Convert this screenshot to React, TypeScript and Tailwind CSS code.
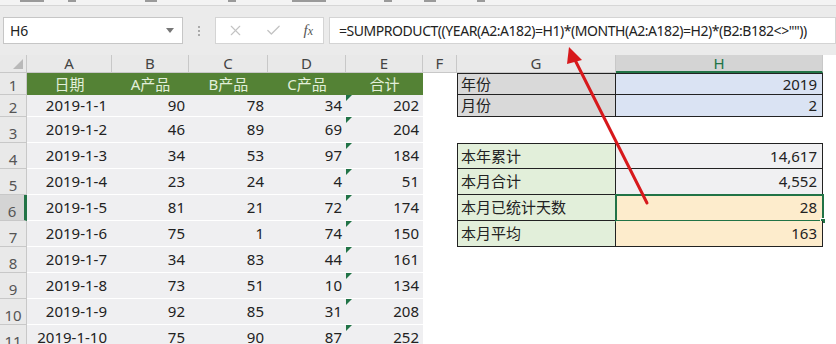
import { X, Check } from "lucide-react";

const font = { fontFamily: '"Noto Sans", "Noto Sans CJK SC", sans-serif' };

const rows: [string, number, number, number, number][] = [
  ["2019-1-1", 90, 78, 34, 202],
  ["2019-1-2", 46, 89, 69, 204],
  ["2019-1-3", 34, 53, 97, 184],
  ["2019-1-4", 23, 24, 4, 51],
  ["2019-1-5", 81, 21, 72, 174],
  ["2019-1-6", 75, 1, 74, 150],
  ["2019-1-7", 34, 83, 44, 161],
  ["2019-1-8", 73, 51, 10, 134],
  ["2019-1-9", 92, 85, 31, 208],
  ["2019-1-10", 75, 90, 87, 252],
];

// right-hand summary block, indexed by sheet row (1-based)
const side: Record<number, { label: string; value: string; g: string; h: string; top?: boolean }> = {
  1: { label: "年份", value: "2019", g: "bg-[#d9d9d9]", h: "bg-[#dae3f3]", top: true },
  2: { label: "月份", value: "2", g: "bg-[#d9d9d9]", h: "bg-[#dae3f3]" },
  4: { label: "本年累计", value: "14,617", g: "bg-[#e2efda]", h: "bg-[#f0f0f2]", top: true },
  5: { label: "本月合计", value: "4,552", g: "bg-[#e2efda]", h: "bg-[#f0f0f2]" },
  6: { label: "本月已统计天数", value: "28", g: "bg-[#e2efda]", h: "bg-[#fdeccc]" },
  7: { label: "本月平均", value: "163", g: "bg-[#e2efda]", h: "bg-[#fdeccc]" },
};

const cols = ["A", "B", "C", "D", "E", "F", "G", "H"];

// x, width of the unreadable ribbon label stubs peeking in at the top
const ribbonStubs = [
  [20, 24], [68, 8], [145, 12], [228, 8], [292, 34], [384, 8], [424, 12], [477, 8],
];

function RowHead({ n }: { n: number }) {
  const sel = n === 6;
  return (
    <div
      className={
        "flex items-end justify-center pb-[1px] border-b border-[#c8c8c8] text-[15px] leading-none " +
        (sel ? "bg-[#d4d4d4] text-[#555] border-r-[3px] border-r-[#217346]" : "bg-[#e9e9e9] text-[#555] border-r border-r-[#c8c8c8]")
      }
    >
      {n}
    </div>
  );
}

function SideCells({ n }: { n: number }) {
  const s = side[n];
  if (!s) {
    return (
      <>
        <div className="bg-white" />
        <div className="bg-white" />
      </>
    );
  }
  const t = s.top ? " border-t" : "";
  const sel = n === 6;
  return (
    <>
      <div className={`${s.g} border-l border-b border-r border-black${t} flex items-center pl-[3px] text-[15px] text-[#222]`}>
        {s.label}
      </div>
      <div className={`${s.h} relative border-b border-r border-black${t} flex items-center justify-end pr-[5px] text-[15px] text-[#222]`}>
        {sel && (
          <div className="absolute -left-[1px] -top-[1px] -right-[2px] -bottom-[2px] border-2 border-[#217346]">
            <div className="absolute -right-[4px] -bottom-[4px] w-[6px] h-[6px] bg-[#217346] border border-white" />
          </div>
        )}
        <span className="relative">{s.value}</span>
      </div>
    </>
  );
}

export default function App() {
  return (
    <div className="relative w-[836px] h-[344px] overflow-hidden bg-[#ebebeb]" style={font}>
      {/* ribbon remnant */}
      <div className="h-[6px] bg-[#f3f3f3] border-b border-[#d6d6d6] relative">
        {ribbonStubs.map(([x, w]) => (
          <span key={x} className="absolute top-0 h-[2px] bg-[#9a9a9a]" style={{ left: x, width: w }} />
        ))}
      </div>

      {/* formula bar */}
      <div className="flex items-center h-[49px] pl-[3px]">
        <div className="w-[180px] h-[27px] bg-white border border-[#c6c6c6] flex items-center justify-between pl-[6px] pr-[8px]">
          <span className="text-[14px] text-[#222]">H6</span>
          <svg width="8" height="5" viewBox="0 0 8 5">
            <path d="M0 0h8L4 5z" fill="#777" />
          </svg>
        </div>
        <div className="w-[32px] flex flex-col items-center gap-[2px]">
          <span className="w-[2px] h-[2px] bg-[#aaa]" />
          <span className="w-[2px] h-[2px] bg-[#aaa]" />
          <span className="w-[2px] h-[2px] bg-[#aaa]" />
        </div>
        <div className="w-[109px] h-[27px] bg-white border border-[#d4d4d4] flex items-center justify-between pl-[11px] pr-[10px]">
          <X size={17} strokeWidth={1.6} color="#c3c3c3" />
          <Check size={17} strokeWidth={1.8} color="#c3c3c3" />
          <span className="text-[15px] italic text-[#555]" style={{ fontFamily: '"Liberation Serif", serif' }}>
            f<span className="text-[12px]">x</span>
          </span>
        </div>
        <div className="ml-[5px] flex-1 h-[27px] bg-white border border-[#d4d4d4] flex items-center pl-[9px] text-[14px] text-[#222] tracking-[-0.45px]">
          =SUMPRODUCT((YEAR(A2:A182)=H1)*(MONTH(A2:A182)=H2)*(B2:B182&lt;&gt;""))
        </div>
      </div>

      {/* sheet grid */}
      <div className="grid grid-cols-[27px_85px_77px_79px_78px_77px_34px_159px_207px_13px] grid-rows-[18px_22px_22px_26px_26px_26px_26px_26px_26px_26px_26px_26px] bg-white">
        {/* column header row */}
        <div className="bg-[#e9e9e9] border-r border-b border-[#c8c8c8] relative">
          <svg className="absolute right-[3px] bottom-[3px]" width="10" height="10" viewBox="0 0 10 10">
            <path d="M10 0V10H0z" fill="#b9b9b9" />
          </svg>
        </div>
        {cols.map((c) => (
          <div
            key={c}
            className={
              "flex items-center justify-center text-[15px] leading-none border-r border-[#c8c8c8] " +
              (c === "H" ? "bg-[#d4d4d4] text-[#217346] border-b-2 border-b-[#217346]" : "bg-[#e9e9e9] text-[#444] border-b border-b-[#c8c8c8]")
            }
          >
            {c}
          </div>
        ))}
        <div className="bg-white" />

        {/* row 1: green header */}
        <RowHead n={1} />
        {["日期", "A产品", "B产品", "C产品", "合计"].map((h) => (
          <div key={h} className="bg-[#548235] text-[#e2efda] flex items-center justify-center text-[15px]">
            {h}
          </div>
        ))}
        <div className="bg-white" />
        <SideCells n={1} />
        <div className="bg-white" />

        {rows.map((r, i) => {
          const n = i + 2;
          return (
            <div key={n} className="contents">
              <RowHead n={n} />
              {r.map((v, j) => (
                <div
                  key={j}
                  className={
                    "relative bg-[#efeff1] border-b border-white flex items-center justify-end text-[15px] text-[#222] " +
                    (j === 0 ? "pr-[5px]" : "pr-[4px]")
                  }
                >
                  {j === 4 && (
                    <svg className="absolute left-0 top-0" width="6" height="6" viewBox="0 0 6 6">
                      <path d="M0 0H6L0 6z" fill="#217346" />
                    </svg>
                  )}
                  {v}
                </div>
              ))}
              <div className="bg-white" />
              <SideCells n={n} />
              <div className="bg-white" />
            </div>
          );
        })}
      </div>

      {/* red annotation arrow */}
      <svg className="absolute inset-0 pointer-events-none" width="836" height="344" viewBox="0 0 836 344">
        <line x1="647" y1="203" x2="574" y2="58" stroke="#d7191c" strokeWidth="3" strokeLinecap="round" />
        <path d="M569 47 L582 60 L567 64 Z" fill="#d7191c" />
      </svg>
    </div>
  );
}
